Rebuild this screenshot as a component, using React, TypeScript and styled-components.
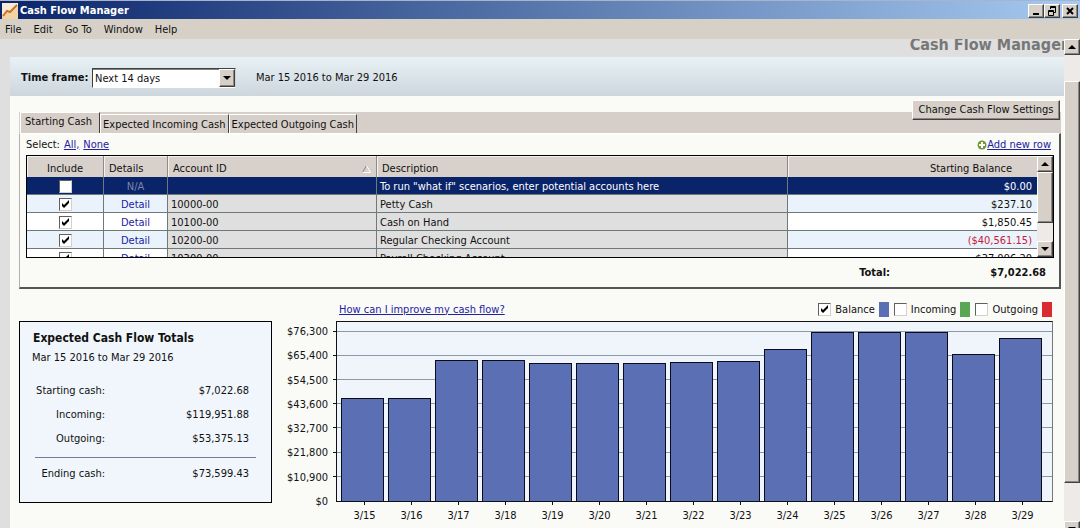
import React, { useState } from "react";
import styled, { createGlobalStyle, css } from "styled-components";

const GlobalStyle = createGlobalStyle`
  * { box-sizing: border-box; }
  body {
    margin: 0;
    background: #dfdfdf;
    color: #111;
    font: 11px/14px "DejaVu Sans Condensed", "DejaVu Sans", sans-serif;
  }
  button, select, input { font: inherit; color: inherit; margin: 0; }
`;

const raised = css`
  border: 1px solid;
  border-color: #fff #404040 #404040 #fff;
  box-shadow: inset -1px -1px 0 #8a8680;
  background: #d6d0c9;
`;

const Window = styled.div`
  height: 100vh;
  display: flex;
  flex-direction: column;
  overflow: hidden;
`;

const TitleBar = styled.header`
  flex: none;
  height: 19px;
  display: flex;
  align-items: center;
  gap: 2px;
  padding: 1px 2px 0;
  background: linear-gradient(90deg, #0a246a, #a6caf0);
  border-top: 1px solid #a9b4cc;
`;

const WindowTitle = styled.h1`
  margin: 0;
  flex: 1;
  font-size: 11px;
  line-height: 14px;
  color: #fff;
`;

const WindowButtons = styled.div`
  display: flex;
`;

const WindowButton = styled.button<{ $apart?: boolean }>`
  ${raised}
  width: 16px;
  height: 14px;
  padding: 0;
  display: grid;
  place-items: center;
  margin-left: ${(p) => (p.$apart ? "2px" : "0")};
`;

const MenuBar = styled.nav`
  flex: none;
  height: 20px;
  display: flex;
  align-items: center;
  gap: 12px;
  padding: 1px 5px 0;
  background: #d6d0c7;
`;

const MenuItem = styled.button`
  border: 0;
  padding: 0;
  background: none;
`;

const Viewport = styled.div`
  flex: 1;
  min-height: 0;
  display: flex;
`;

const Content = styled.main`
  flex: 1;
  min-width: 0;
  padding-left: 10px;
  overflow: hidden;
  display: flex;
  flex-direction: column;
`;

const PageTitle = styled.h2`
  flex: none;
  margin: 0 -4px 0 0;
  height: 18px;
  overflow: hidden;
  display: flex;
  align-items: center;
  justify-content: flex-end;
  font-size: 16px;
  line-height: 16px;
  padding-bottom: 7px;
  color: #777;
  white-space: nowrap;
`;

const TimeBar = styled.section`
  flex: none;
  height: 39px;
  display: flex;
  align-items: center;
  padding: 2px 11px 0;
  background: linear-gradient(#e8f1f5, #cdd6dd);
`;

const TimeLabel = styled.label`
  width: 71px;
  font-weight: bold;
`;

const SelectBox = styled.div`
  width: 144px;
  height: 20px;
  display: grid;
  grid-template-columns: 1fr 16px;
  background: #fff;
  border: 1px solid;
  border-color: #404040 #d0d0d0 #fff #404040;
  box-shadow: inset 0 1px 0 #808080;
`;

const SelectInput = styled.select`
  grid-area: 1 / 1 / 2 / 3;
  appearance: none;
  border: 0;
  padding: 2px 2px 0;
  background: none;
`;

const SelectArrow = styled.span`
  ${raised}
  grid-area: 1 / 2 / 2 / 3;
  display: grid;
  place-items: center;
  pointer-events: none;
`;

const RangeText = styled.span`
  margin-left: 20px;
`;

const Body = styled.div`
  flex: 1;
  background: #fafaf7;
  padding: 0 3px 0 9px;
`;

const TabStrip = styled.div`
  height: 37px;
  display: flex;
  align-items: flex-end;
  padding-left: 1px;
  background: linear-gradient(transparent 16px, #d6cfc9 16px);
`;

const Tab = styled.button<{ $active?: boolean }>`
  height: ${(p) => (p.$active ? "21px" : "19px")};
  padding: ${(p) => (p.$active ? "0 7px 2px 5px" : "2px 2px 0 3px")};
  border: 0;
  border-top: 1px solid #fff;
  border-right: 1px solid #404040;
  background: #d6cfc9;
  box-shadow: inset 1px 0 0 #fff;
  white-space: nowrap;
`;

const SettingsButton = styled.button`
  ${raised}
  align-self: flex-start;
  height: 20px;
  width: 148px;
  padding: 0;
  margin: 4px 1px 0 auto;
  white-space: nowrap;
`;

const Panel = styled.section`
  padding: 0 5px 0 6px;
  border: solid;
  border-width: 1px 2px 2px 1px;
  border-color: #fff #555 #555 #b5b1aa;
`;

const PanelTools = styled.div`
  height: 21px;
  display: flex;
  align-items: center;
  justify-content: space-between;
  padding-right: 3px;
`;

const SelectLinks = styled.div`
  display: flex;
  gap: 4px;
`;

const Link = styled.a`
  color: #2222a0;
  text-decoration: underline;
`;

const IconLink = styled(Link)`
  display: flex;
  align-items: center;
`;

const GridBox = styled.div`
  height: 103px;
  overflow: hidden;
  display: flex;
  border: 1px solid #000;
`;

const Grid = styled.table`
  flex: 1;
  min-width: 0;
  height: 0;
  table-layout: fixed;
  border-collapse: separate;
  border-spacing: 0;
`;

const Col = styled.col<{ $w?: number }>`
  width: ${(p) => (p.$w ? `${p.$w}px` : "auto")};
`;

const Head = styled.th<{ $align?: string; $end?: boolean }>`
  height: 21px;
  padding: 4px ${(p) => (p.$end ? "25px" : "5px")} 0;
  background: #d8d0cb;
  border-right: ${(p) => (p.$end ? "0" : "1px solid #8f8a85")};
  box-shadow: inset 1px 1px 0 #f4f1ee;
  font-weight: normal;
  text-align: ${(p) => p.$align ?? "left"};
  white-space: nowrap;
`;

const HeadSort = styled.span`
  display: flex;
  align-items: center;
  justify-content: space-between;
`;

const Row = styled.tr<{ $selected?: boolean }>`
  background: ${(p) => (p.$selected ? "#0a246a" : "#fff")};
  color: ${(p) => (p.$selected ? "#fff" : "inherit")};
  &:nth-child(even) { background: #eaf3fb; }
`;

const Cell = styled.td<{ $align?: string; $shade?: boolean; $end?: boolean; $color?: string }>`
  height: 18px;
  padding: 2px ${(p) => (p.$end ? "5px" : "3px")} 0;
  border-bottom: 1px solid #6f7a78;
  border-right: ${(p) => (p.$end ? "0" : "1px solid #6f7a78")};
  background: ${(p) => (p.$shade ? "#dfdfdf" : "transparent")};
  color: ${(p) => p.$color ?? "inherit"};
  text-align: ${(p) => p.$align ?? "left"};
  white-space: nowrap;
`;

const DetailLink = styled.a`
  color: #1c1ca0;
  text-decoration: none;
`;

const CheckFrame = styled.span`
  display: inline-grid;
  width: 13px;
  height: 13px;
  vertical-align: top;
`;

const CheckInput = styled.input`
  grid-area: 1 / 1;
  appearance: none;
  width: 13px;
  height: 13px;
  background: #fff;
  border: 1px solid;
  border-color: #606060 #d6d0c9 #d6d0c9 #606060;
`;

const CheckMark = styled.svg`
  grid-area: 1 / 1;
  pointer-events: none;
`;

const TotalRow = styled.div`
  height: 29px;
  display: flex;
  align-items: center;
  justify-content: flex-end;
  padding-right: 8px;
  font-weight: bold;
`;

const TotalValue = styled.span`
  width: 156px;
  text-align: right;
`;

const Lower = styled.section`
  display: grid;
  grid-template-columns: 253px 1fr;
  padding: 1px 8px 0 0;
`;

const Totals = styled.section`
  height: 182px;
  margin-top: 31px;
  padding: 8px 16px 0 12px;
  background: #f0f6fb;
  border: 1px solid #000;
`;

const TotalsTitle = styled.h3`
  margin: 0;
  padding-left: 1px;
  font-size: 12px;
  line-height: 16px;
`;

const TotalsRange = styled.p`
  margin: 5px 0 0;
`;

const TotalsTable = styled.table`
  width: 221px;
  margin: 14px 0 0 3px;
  border-collapse: collapse;
`;

const TotalsLabel = styled.th`
  width: 70px;
  height: 24px;
  padding: 0;
  font-weight: normal;
  text-align: right;
`;

const TotalsValue = styled.td`
  padding: 0 7px 0 0;
  text-align: right;
`;

const LastItemRow = styled.tr`
  & > * { height: 30px; padding-bottom: 5px; }
`;

const EndingRow = styled.tr`
  border-top: 1px solid #70809a;
  & > * { height: 33px; }
`;

const ChartArea = styled.section`
  display: grid;
  grid-template-columns: 64px 1fr;
  grid-template-rows: 31px 181px auto;
  min-width: 0;
`;

const ChartTop = styled.div`
  grid-column: 2;
  display: flex;
  align-items: center;
  justify-content: space-between;
  padding: 8px 1px 0 3px;
`;

const Legend = styled.div`
  display: flex;
  align-items: center;
  gap: 5px;
`;

const LegendItem = styled.label`
  display: flex;
  align-items: center;
  gap: 4px;
`;

const Swatch = styled.span<{ $color: string }>`
  width: 10px;
  height: 15px;
  background: ${(p) => p.$color};
`;

const Axis = styled.ul`
  margin: 4px 0 -7px;
  padding: 0 8px 0 0;
  list-style: none;
  display: flex;
  flex-direction: column;
  justify-content: space-between;
  text-align: right;
`;

const AxisLabel = styled.li`
  line-height: 14px;
`;

const Plot = styled.div`
  position: relative;
  display: flex;
  align-items: flex-end;
  gap: 4px;
  padding: 0 10px 0 4px;
  background: #eff5fa;
  border: 1px solid #111;
  border-right-color: #777;
`;

const Rule = styled.span`
  position: absolute;
  left: -4px;
  right: 0;
  height: 1px;
  background: linear-gradient(90deg, #111 4px, #8b98a8 4px);
`;

const Bar = styled.span`
  position: relative;
  flex: 1;
  background: #5a6fb4;
  border: 1px solid #0b0b1c;
  border-bottom: 0;
`;

const Dates = styled.ul`
  grid-column: 2;
  margin: 0;
  padding: 0 9px 0 7px;
  list-style: none;
  display: flex;
  gap: 4px;
`;

const DateLabel = styled.li`
  flex: 1;
  display: flex;
  flex-direction: column;
  align-items: center;
  gap: 4px;
  &::before {
    content: "";
    width: 1px;
    height: 3px;
    background: #111;
  }
`;

const ScrollTrack = styled.div<{ $overrun?: number }>`
  flex: none;
  width: 16px;
  display: flex;
  flex-direction: column;
  margin-bottom: ${(p) => -(p.$overrun ?? 0)}px;
  background: #edeae7;
`;

const ScrollButton = styled.button`
  ${raised}
  flex: none;
  height: 16px;
  padding: 0;
  display: grid;
  place-items: center;
`;

const ScrollThumb = styled.div<{ $before: number; $size: number; $after: number }>`
  flex: 1;
  display: flex;
  flex-direction: column;
  &::before { content: ""; flex: ${(p) => p.$before}; }
  &::after { content: ""; flex: ${(p) => p.$after}; }
  & > span { ${raised} flex: ${(p) => p.$size}; }
`;

function Triangle({ up }: { up?: boolean }) {
  return (
    <svg width="8" height="4" viewBox="0 0 8 4">
      <path d={up ? "M4 0L8 4H0Z" : "M0 0H8L4 4Z"} fill="#000" />
    </svg>
  );
}

function Scrollbar(p: { before: number; size: number; after: number; overrun?: number }) {
  return (
    <ScrollTrack $overrun={p.overrun}>
      <ScrollButton aria-label="Scroll up"><Triangle up /></ScrollButton>
      <ScrollThumb $before={p.before} $size={p.size} $after={p.after}><span /></ScrollThumb>
      <ScrollButton aria-label="Scroll down"><Triangle /></ScrollButton>
    </ScrollTrack>
  );
}

function Check({ initial, label }: { initial: boolean; label?: string }) {
  const [on, setOn] = useState(initial);
  return (
    <CheckFrame>
      <CheckInput type="checkbox" aria-label={label} checked={on} onChange={() => setOn(!on)} />
      {on && (
        <CheckMark width="13" height="13" viewBox="0 0 13 13">
          <path d="M3 5v3l2 2 5-5V2L5 7Z" fill="#000" />
        </CheckMark>
      )}
    </CheckFrame>
  );
}

const accounts = [
  { id: "10000-00", name: "Petty Cash", balance: "$237.10" },
  { id: "10100-00", name: "Cash on Hand", balance: "$1,850.45" },
  { id: "10200-00", name: "Regular Checking Account", balance: "($40,561.15)" },
  { id: "10300-00", name: "Payroll Checking Account", balance: "$37,096.20" },
];

const axis = ["$76,300", "$65,400", "$54,500", "$43,600", "$32,700", "$21,800", "$10,900", "$0"];

const days = [
  { date: "3/15", value: 46500 },
  { date: "3/16", value: 46500 },
  { date: "3/17", value: 63600 },
  { date: "3/18", value: 63600 },
  { date: "3/19", value: 62200 },
  { date: "3/20", value: 62200 },
  { date: "3/21", value: 62200 },
  { date: "3/22", value: 62700 },
  { date: "3/23", value: 63200 },
  { date: "3/24", value: 68500 },
  { date: "3/25", value: 76200 },
  { date: "3/26", value: 76200 },
  { date: "3/27", value: 76200 },
  { date: "3/28", value: 66300 },
  { date: "3/29", value: 73500 },
];

const AXIS_TOP = 80700;
const series = [
  { name: "Balance", color: "#5a6fb4", on: true },
  { name: "Incoming", color: "#59a655", on: false },
  { name: "Outgoing", color: "#d92b2f", on: false },
];

export default function App() {
  return (
    <Window>
      <GlobalStyle />
      <TitleBar>
        <svg width="16" height="16" viewBox="0 0 16 16">
          <rect width="16" height="16" fill="#f8ead4" />
          <path d="M0 16V13L5 9L8 10L16 3V16Z" fill="#f3d3a4" />
          <path d="M1 13L5 8L8 9L15 2" fill="none" stroke="#c8752a" strokeWidth="2" />
        </svg>
        <WindowTitle>Cash Flow Manager</WindowTitle>
        <WindowButtons>
          <WindowButton aria-label="Minimize">
            <svg width="10" height="10" viewBox="0 0 10 10"><path d="M2 7H8V9H2Z" /></svg>
          </WindowButton>
          <WindowButton aria-label="Restore">
            <svg width="10" height="10" viewBox="0 0 10 10" fill="none" stroke="#000">
              <path d="M3.5 3V.5H8.5V6.5H7M3 1.5H9M1.5 4.5H6.5V9.5H1.5ZM1 5.5H7" />
            </svg>
          </WindowButton>
          <WindowButton aria-label="Close" $apart>
            <svg width="10" height="10" viewBox="0 0 10 10" fill="none" stroke="#000" strokeWidth="2">
              <path d="M2 2L8 8M8 2L2 8" />
            </svg>
          </WindowButton>
        </WindowButtons>
      </TitleBar>
      <MenuBar>
        {["File", "Edit", "Go To", "Window", "Help"].map((m) => (
          <MenuItem key={m}>{m}</MenuItem>
        ))}
      </MenuBar>
      <Viewport>
        <Content>
          <PageTitle>Cash Flow Manager</PageTitle>
          <TimeBar>
            <TimeLabel htmlFor="frame">Time frame:</TimeLabel>
            <SelectBox>
              <SelectInput id="frame" defaultValue="14">
                <option value="14">Next 14 days</option>
                <option value="30">Next 30 days</option>
              </SelectInput>
              <SelectArrow><Triangle /></SelectArrow>
            </SelectBox>
            <RangeText>Mar 15 2016 to Mar 29 2016</RangeText>
          </TimeBar>
          <Body>
            <TabStrip>
              <Tab $active>Starting Cash</Tab>
              <Tab>Expected Incoming Cash</Tab>
              <Tab>Expected Outgoing Cash</Tab>
              <SettingsButton>Change Cash Flow Settings</SettingsButton>
            </TabStrip>
            <Panel>
              <PanelTools>
                <SelectLinks>
                  <span>Select:</span>
                  <Link href="#all">All,</Link>
                  <Link href="#none">None</Link>
                </SelectLinks>
                <IconLink href="#add">
                  <svg width="10" height="10" viewBox="0 0 10 10">
                    <circle cx="5" cy="5" r="4.5" fill="#6f9a35" />
                    <path d="M5 2V8M2 5H8" stroke="#fff" strokeWidth="2" />
                  </svg>
                  Add new row
                </IconLink>
              </PanelTools>
              <GridBox>
                <Grid>
                  <colgroup>
                    <Col $w={77} />
                    <Col $w={64} />
                    <Col $w={209} />
                    <Col />
                    <Col $w={249} />
                  </colgroup>
                  <thead>
                    <tr>
                      <Head $align="center">Include</Head>
                      <Head>Details</Head>
                      <Head>
                        <HeadSort>
                          Account ID
                          <svg width="9" height="8" viewBox="0 0 9 8" fill="none">
                            <path d="M0.5 7.5L4.5 .5" stroke="#8a8680" />
                            <path d="M4.5 .5L8.5 7.5H.5" stroke="#fff" />
                          </svg>
                        </HeadSort>
                      </Head>
                      <Head>Description</Head>
                      <Head $align="right" $end>Starting Balance</Head>
                    </tr>
                  </thead>
                  <tbody>
                    <Row $selected>
                      <Cell $align="center"><Check initial={false} label="Include potential account" /></Cell>
                      <Cell $align="center" $color="#7c86a8">N/A</Cell>
                      <Cell />
                      <Cell>To run "what if" scenarios, enter potential accounts here</Cell>
                      <Cell $align="right" $end>$0.00</Cell>
                    </Row>
                    {accounts.map((a) => (
                      <Row key={a.id}>
                        <Cell $align="center"><Check initial label={`Include ${a.name}`} /></Cell>
                        <Cell $align="center"><DetailLink href={`#${a.id}`}>Detail</DetailLink></Cell>
                        <Cell $shade>{a.id}</Cell>
                        <Cell $shade>{a.name}</Cell>
                        <Cell $align="right" $end $color={a.balance[0] === "(" ? "#c8203c" : undefined}>
                          {a.balance}
                        </Cell>
                      </Row>
                    ))}
                  </tbody>
                </Grid>
                <Scrollbar before={0} size={50} after={19} />
              </GridBox>
              <TotalRow>
                <span>Total:</span>
                <TotalValue>$7,022.68</TotalValue>
              </TotalRow>
            </Panel>
            <Lower>
              <Totals>
                <TotalsTitle>Expected Cash Flow Totals</TotalsTitle>
                <TotalsRange>Mar 15 2016 to Mar 29 2016</TotalsRange>
                <TotalsTable>
                  <tbody>
                    <tr><TotalsLabel>Starting cash:</TotalsLabel><TotalsValue>$7,022.68</TotalsValue></tr>
                    <tr><TotalsLabel>Incoming:</TotalsLabel><TotalsValue>$119,951.88</TotalsValue></tr>
                    <LastItemRow><TotalsLabel>Outgoing:</TotalsLabel><TotalsValue>$53,375.13</TotalsValue></LastItemRow>
                    <EndingRow><TotalsLabel>Ending cash:</TotalsLabel><TotalsValue>$73,599.43</TotalsValue></EndingRow>
                  </tbody>
                </TotalsTable>
              </Totals>
              <ChartArea>
                <ChartTop>
                  <Link href="#improve">How can I improve my cash flow?</Link>
                  <Legend>
                    {series.map((s) => (
                      <LegendItem key={s.name}>
                        <Check initial={s.on} />
                        {s.name}
                        <Swatch $color={s.color} />
                      </LegendItem>
                    ))}
                  </Legend>
                </ChartTop>
                <Axis>
                  {axis.map((v) => <AxisLabel key={v}>{v}</AxisLabel>)}
                </Axis>
                <Plot>
                  {axis.slice(0, -1).map((v, i) => (
                    <Rule key={v} style={{ bottom: `${((7 - i) * 10900 * 100) / AXIS_TOP}%` }} />
                  ))}
                  {days.map((d) => (
                    <Bar key={d.date} style={{ height: `${(d.value * 100) / AXIS_TOP}%` }} />
                  ))}
                </Plot>
                <Dates>
                  {days.map((d) => <DateLabel key={d.date}>{d.date}</DateLabel>)}
                </Dates>
              </ChartArea>
            </Lower>
          </Body>
        </Content>
        <Scrollbar before={26} size={402} after={38} overrun={9} />
      </Viewport>
    </Window>
  );
}
